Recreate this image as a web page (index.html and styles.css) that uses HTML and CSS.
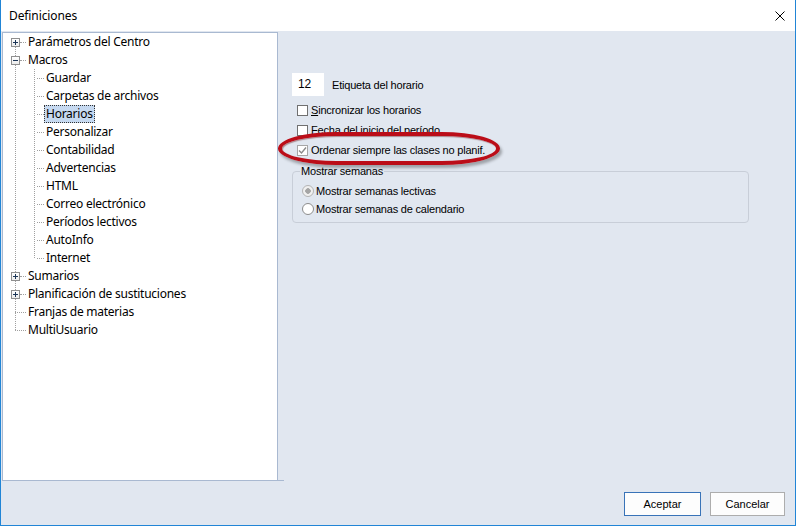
FILE: index.html
```html
<html>
<head>
<meta charset="UTF-8">
<title>Definiciones</title>
<link rel="stylesheet" href="styles.css">
</head>
<body>
<div class="window">
    <div class="titlebar">
        <span class="title">Definiciones</span>
        <span class="close">
            <svg width="10" height="10" viewBox="0 0 10 10"><path d="M0.5 0.5 L9.5 9.5 M9.5 0.5 L0.5 9.5" stroke="#000" stroke-width="1" fill="none"/></svg>
        </span>
    </div>

    <div class="main">
        <div class="left">
            <div class="tree">
                <ul class="level_top">
                    <li><div class="row"><span class="expander plus"></span><span class="dots"></span><span class="label">Parámetros del Centro</span></div></li>
                    <li><div class="row"><span class="expander"></span><span class="dots"></span><span class="label">Macros</span></div>
                        <ul class="level_child">
                            <li><div class="row"><span class="dots"></span><span class="label">Guardar</span></div></li>
                            <li><div class="row"><span class="dots"></span><span class="label">Carpetas de archivos</span></div></li>
                            <li><div class="row"><span class="dots"></span><span class="label selected">Horarios</span></div></li>
                            <li><div class="row"><span class="dots"></span><span class="label">Personalizar</span></div></li>
                            <li><div class="row"><span class="dots"></span><span class="label">Contabilidad</span></div></li>
                            <li><div class="row"><span class="dots"></span><span class="label">Advertencias</span></div></li>
                            <li><div class="row"><span class="dots"></span><span class="label">HTML</span></div></li>
                            <li><div class="row"><span class="dots"></span><span class="label">Correo electrónico</span></div></li>
                            <li><div class="row"><span class="dots"></span><span class="label">Períodos lectivos</span></div></li>
                            <li><div class="row"><span class="dots"></span><span class="label">AutoInfo</span></div></li>
                            <li><div class="row"><span class="dots"></span><span class="label">Internet</span></div></li>
                        </ul>
                    </li>
                    <li><div class="row"><span class="expander plus"></span><span class="dots"></span><span class="label">Sumarios</span></div></li>
                    <li><div class="row"><span class="expander plus"></span><span class="dots"></span><span class="label">Planificación de sustituciones</span></div></li>
                    <li><div class="row"><span class="stub"></span><span class="label">Franjas de materias</span></div></li>
                    <li><div class="row"><span class="stub"></span><span class="label">MultiUsuario</span></div></li>
                </ul>
            </div>
        </div>

        <div class="settings">
            <div class="edit_row">
                <span class="edit">12</span>
                <span>Etiqueta del horario</span>
            </div>
            <div class="check_row"><span class="checkbox"></span><span><u>S</u>incronizar los horarios</span></div>
            <div class="check_row"><span class="checkbox"></span><span>Fecha del inicio del período</span></div>
            <div class="check_row"><span class="checkbox checked"><svg width="9" height="9" viewBox="0 0 9 9"><path d="M1 4.5 L3.5 7 L8 1.5" stroke="#8a8a8a" stroke-width="1.4" fill="none"/></svg></span><span>Ordenar siempre las clases no planif.</span></div>

            <fieldset class="group">
                <legend>Mostrar semanas</legend>
                <div class="radio_row"><span class="radio on"></span><span>Mostrar semanas lectivas</span></div>
                <div class="radio_row"><span class="radio"></span><span>Mostrar semanas de calendario</span></div>
            </fieldset>

            <div class="highlight"></div>
        </div>
    </div>

    <div class="footer">
        <span class="button default">Aceptar</span>
        <span class="button">Cancelar</span>
    </div>
</div>
</body>
</html>
```

FILE: styles.css
```css
* {
    box-sizing: border-box;
}

body {
    margin: 0;
    font-family: "Liberation Sans", Arial, sans-serif;
    font-size: 11px;
    color: #000;
    background: #e1e7f0;
}

.window {
    width: 796px;
    height: 526px;
    display: flex;
    flex-direction: column;
    background: #e1e7f0;
    border: 1px solid #2185d6;
    border-top: none;
}

.titlebar {
    height: 31px;
    flex: 0 0 31px;
    background: #fff;
    display: flex;
    align-items: center;
    justify-content: space-between;
    padding: 0 10px 0 8px;
    margin: 0 -1px;
    border-right: 1px solid #2185d6;
    border-left: 1px solid #2185d6;
}

.titlebar .title {
    font-family: "Noto Sans", sans-serif;
    font-size: 12px;
    letter-spacing: -0.1px;
}

.titlebar .close {
    display: flex;
}

.main {
    display: flex;
    margin-top: 1px;
    height: 449px;
    flex: 0 0 449px;
}

/* tree */

.left {
    width: 282px;
    margin-left: 1px;
    border-bottom: 1px solid #a9b9d1;
}

.tree {
    width: 276px;
    height: 448px;
    background: #fff;
    border: 1px solid #a9b9d1;
    border-bottom: none;
    font-family: "Noto Sans", sans-serif;
    font-size: 12px;
    letter-spacing: -0.25px;
}

.tree ul {
    list-style: none;
    margin: 0;
    padding: 0;
    position: relative;
}

.tree .level_top:before {
    content: '';
    position: absolute;
    left: 12px;
    top: 9px;
    bottom: 9px;
    border-left: 1px dotted #a0a0a0;
}

.tree .level_child:before {
    content: '';
    position: absolute;
    left: 31px;
    top: 0;
    bottom: 9px;
    border-left: 1px dotted #a0a0a0;
}

.tree .row {
    height: 18px;
    display: flex;
    align-items: center;
}

.tree .expander {
    position: relative;
    width: 9px;
    height: 9px;
    margin-left: 8px;
    border: 1px solid #8f8f8f;
    background: linear-gradient(#1c3657, #1c3657) center / 5px 1px no-repeat, linear-gradient(#fff, #ececec);
}

.tree .expander.plus {
    background: linear-gradient(#1c3657, #1c3657) center / 5px 1px no-repeat, linear-gradient(#1c3657, #1c3657) center / 1px 5px no-repeat, linear-gradient(#fff, #ececec);
}

.tree .dots {
    width: 6px;
    height: 1px;
    border-top: 1px dotted #a0a0a0;
}

.tree .level_child .dots {
    width: 7px;
    margin-left: 34px;
}

.tree .stub {
    width: 11px;
    height: 1px;
    margin-left: 12px;
    border-top: 1px dotted #a0a0a0;
}

.tree .label {
    height: 18px;
    line-height: 18px;
    padding: 0 2px;
    white-space: nowrap;
}

.tree .label.selected {
    background: #c6d9f0;
    outline: 1px dotted #333;
    outline-offset: -1px;
}

/* settings */

.settings {
    flex: 1;
    position: relative;
    padding: 41px 0 0 8px;
    letter-spacing: -0.2px;
}

.edit_row {
    display: flex;
    align-items: center;
    height: 23px;
}

.edit_row .edit {
    width: 32px;
    height: 23px;
    line-height: 23px;
    background: #fff;
    padding-left: 6px;
    margin-right: 8px;
    font-size: 12px;
}

.check_row {
    display: flex;
    align-items: center;
    height: 20px;
    padding-left: 5px;
}

.edit_row + .check_row {
    margin-top: 4px;
}

.checkbox {
    width: 11px;
    height: 11px;
    border: 1px solid #707070;
    background: #fff;
    margin-right: 3px;
    display: flex;
    align-items: center;
    justify-content: center;
}

.checkbox.checked {
    border-color: #a6a6a6;
}

.group {
    width: 457px;
    margin: 5px 0 0 0;
    padding: 4px 0 4px 9px;
    border: 1px solid #c8ced8;
    border-radius: 4px;
}

.group legend {
    padding: 0 1px;
    margin-left: -2px;
    line-height: 13px;
}

.radio_row {
    display: flex;
    align-items: center;
    height: 18px;
}

.radio {
    width: 12px;
    height: 12px;
    border-radius: 50%;
    border: 1px solid #8c8c8c;
    background: #fff;
    margin-right: 2px;
}

.radio.on {
    border-color: #b4b4b4;
    background: radial-gradient(circle, #a5a5a5 0, #a5a5a5 2.5px, #f0f0f0 3px);
}

.highlight {
    position: absolute;
    left: -6px;
    top: 100px;
    width: 222px;
    height: 33px;
    border: 4px solid #bb0d18;
    border-radius: 60px / 17px;
    box-shadow: 2px 3px 3px rgba(0, 0, 0, 0.3), inset 1px 1px 1px rgba(90, 0, 0, 0.4);
}

/* footer */

.footer {
    flex: 1;
    display: flex;
    justify-content: flex-end;
    align-items: flex-start;
    padding: 11px 10px 0 0;
    gap: 9px;
}

.button {
    height: 24px;
    line-height: 22px;
    text-align: center;
    background: #fdfdfd;
    border: 1px solid #adadad;
    width: 75px;
}

.button.default {
    width: 77px;
    border-color: #3873b8;
}
```
